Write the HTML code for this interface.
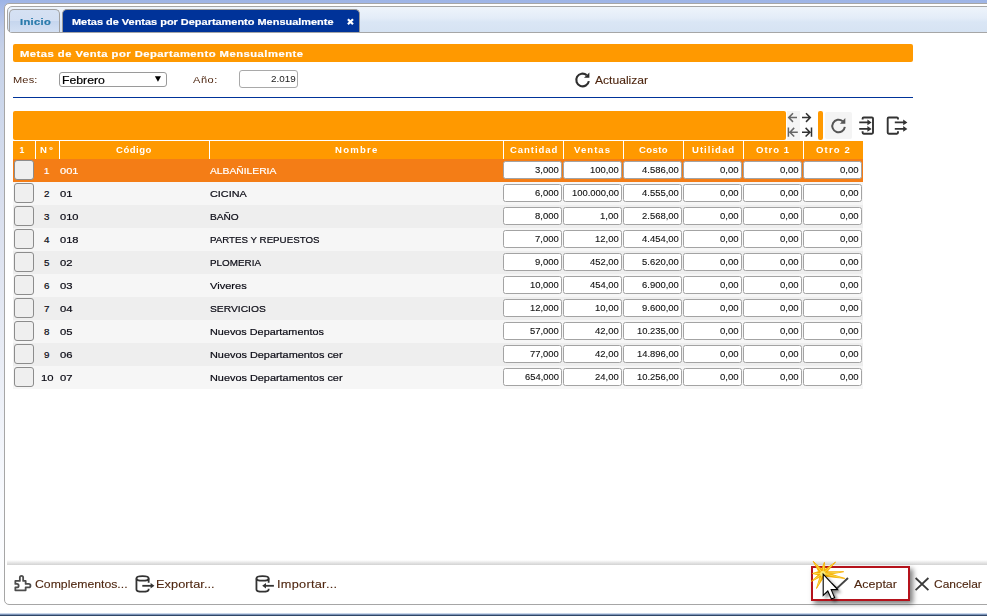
<!DOCTYPE html>
<html><head><meta charset="utf-8"><title>Metas de Ventas por Departamento Mensualmente</title>
<style>
html,body{margin:0;padding:0;}
body{width:987px;height:616px;overflow:hidden;position:relative;font-family:"Liberation Sans",sans-serif;
 background:linear-gradient(to bottom,#9db4e6 0px,#afc0e8 15px,#becbe8 30px,#c7d2e8 50px,#ccd7eb 100px,#d9dfee 200px,#e8ecf5 350px,#f8fafe 500px,#ffffff 616px);}
.abs{position:absolute;}
.t{position:absolute;display:block;transform-origin:0 0;white-space:nowrap;line-height:20px;height:20px;font-family:"Liberation Sans",sans-serif;}
#outer{left:4px;top:3px;width:1000px;height:600px;border:1px solid #a6a6a6;border-radius:5px;background:#fff;}
#nav{left:7px;top:6px;width:1000px;height:25px;border:1px solid #a6a6a6;border-radius:5px;
 background:linear-gradient(to bottom,#eef4fb 0%,#e3ecf8 45%,#dae6f5 60%,#d6e3f3 100%);}
#tab1{left:9px;top:9px;width:49px;height:22px;border:1px solid #a0a0a0;border-bottom:none;border-radius:5px 5px 0 0;
 background:linear-gradient(to bottom,#d5e1f3 0%,#d3dff2 48%,#c6d6ee 52%,#d3e0f3 100%);}
#tab2{left:62px;top:9px;width:296px;height:22px;border:1px solid #9a9a9a;border-bottom:none;border-radius:5px 5px 0 0;background:#003399;}
#title{left:13px;top:44px;width:900px;height:18px;border-radius:2px;background:#ff9900;}
#sel{left:59px;top:72px;width:106px;height:13px;border:1px solid #9a9a9a;border-radius:3px;background:#fff;}
#anio{left:239px;top:70px;width:57px;height:16px;border:1px solid #a9a9a9;border-radius:3px;background:#fff;}
#bline{left:13px;top:97px;width:900px;height:1px;background:#003399;}
#obar{left:13px;top:111px;width:773px;height:29px;border-radius:2px;background:#ff9900;}
#obar2{left:818px;top:111px;width:5px;height:29px;border-radius:2px;background:#ff9900;}
#g1{left:787px;top:111px;width:13px;height:29px;background:#f4f4f4;}
#g2{left:825px;top:112px;width:27px;height:27px;border-radius:2px;background:#f4f4f4;}
#thead{left:13px;top:141px;width:850px;height:18px;background:#ff9900;}
.vs{position:absolute;top:141px;width:1px;height:18px;background:#fff;}
.row{position:absolute;left:13px;width:850px;height:23px;}
.cb{position:absolute;left:1px;top:1px;width:18px;height:18px;border:1px solid #8c8c8c;border-radius:3px;background:#efefef;}
.in{position:absolute;top:2px;width:57px;height:16px;border:1px solid #a3a3a3;border-radius:2.5px;background:#fff;}
#fshadow{left:7px;top:560px;width:990px;height:5px;background:linear-gradient(to bottom,rgba(255,255,255,0) 0%,#ececec 40%,#d2d2d2 100%);}
#okbox{left:811px;top:566px;width:95px;height:31px;border:2px solid #b5121b;background:#fff;box-shadow:3px 3px 5px rgba(0,0,0,.5);}
#bot1{left:0;top:613px;width:987px;height:1px;background:#c9d6ea;}
#bot2{left:0;top:614px;width:987px;height:1px;background:#7d94b8;}
#bot3{left:0;top:615px;width:987px;height:1px;background:#2f4668;}
svg{position:absolute;left:0;top:0;overflow:visible;}
</style></head><body>
<div id="outer" class="abs"></div>
<div id="nav" class="abs"></div>
<div id="tab1" class="abs"></div>
<div id="tab2" class="abs"></div>
<div id="title" class="abs"></div>
<div id="sel" class="abs"></div>
<div id="anio" class="abs"></div>
<div id="bline" class="abs"></div>
<div id="obar" class="abs"></div>
<div id="g1" class="abs"></div>
<div id="obar2" class="abs"></div>
<div id="g2" class="abs"></div>
<div id="thead" class="abs"></div>
<div class="vs" style="left:35px"></div><div class="vs" style="left:59px"></div><div class="vs" style="left:209px"></div>
<div class="vs" style="left:503px"></div><div class="vs" style="left:563px"></div><div class="vs" style="left:623px"></div>
<div class="vs" style="left:683px"></div><div class="vs" style="left:743px"></div><div class="vs" style="left:803px"></div>
<div class="row" style="top:159px;background:#f47d16"><div class="cb"></div><div class="in" style="left:490px"></div><div class="in" style="left:550px"></div><div class="in" style="left:610px"></div><div class="in" style="left:670px"></div><div class="in" style="left:730px"></div><div class="in" style="left:790px"></div></div>
<div class="row" style="top:182px;background:#f6f6f6"><div class="cb"></div><div class="in" style="left:490px"></div><div class="in" style="left:550px"></div><div class="in" style="left:610px"></div><div class="in" style="left:670px"></div><div class="in" style="left:730px"></div><div class="in" style="left:790px"></div></div>
<div class="row" style="top:205px;background:#eeeeee"><div class="cb"></div><div class="in" style="left:490px"></div><div class="in" style="left:550px"></div><div class="in" style="left:610px"></div><div class="in" style="left:670px"></div><div class="in" style="left:730px"></div><div class="in" style="left:790px"></div></div>
<div class="row" style="top:228px;background:#f6f6f6"><div class="cb"></div><div class="in" style="left:490px"></div><div class="in" style="left:550px"></div><div class="in" style="left:610px"></div><div class="in" style="left:670px"></div><div class="in" style="left:730px"></div><div class="in" style="left:790px"></div></div>
<div class="row" style="top:251px;background:#eeeeee"><div class="cb"></div><div class="in" style="left:490px"></div><div class="in" style="left:550px"></div><div class="in" style="left:610px"></div><div class="in" style="left:670px"></div><div class="in" style="left:730px"></div><div class="in" style="left:790px"></div></div>
<div class="row" style="top:274px;background:#f6f6f6"><div class="cb"></div><div class="in" style="left:490px"></div><div class="in" style="left:550px"></div><div class="in" style="left:610px"></div><div class="in" style="left:670px"></div><div class="in" style="left:730px"></div><div class="in" style="left:790px"></div></div>
<div class="row" style="top:297px;background:#eeeeee"><div class="cb"></div><div class="in" style="left:490px"></div><div class="in" style="left:550px"></div><div class="in" style="left:610px"></div><div class="in" style="left:670px"></div><div class="in" style="left:730px"></div><div class="in" style="left:790px"></div></div>
<div class="row" style="top:320px;background:#f6f6f6"><div class="cb"></div><div class="in" style="left:490px"></div><div class="in" style="left:550px"></div><div class="in" style="left:610px"></div><div class="in" style="left:670px"></div><div class="in" style="left:730px"></div><div class="in" style="left:790px"></div></div>
<div class="row" style="top:343px;background:#eeeeee"><div class="cb"></div><div class="in" style="left:490px"></div><div class="in" style="left:550px"></div><div class="in" style="left:610px"></div><div class="in" style="left:670px"></div><div class="in" style="left:730px"></div><div class="in" style="left:790px"></div></div>
<div class="row" style="top:366px;background:#f6f6f6"><div class="cb"></div><div class="in" style="left:490px"></div><div class="in" style="left:550px"></div><div class="in" style="left:610px"></div><div class="in" style="left:670px"></div><div class="in" style="left:730px"></div><div class="in" style="left:790px"></div></div>
<div id="fshadow" class="abs"></div>
<div id="okbox" class="abs"></div>
<div id="bot1" class="abs"></div><div id="bot2" class="abs"></div><div id="bot3" class="abs"></div>
<span id="t0" class="t" style="left:19.73px;top:11.67px;font-size:9.6px;font-weight:700;color:#2779aa;letter-spacing:0.306px;transform:scaleX(1.1600);-webkit-text-stroke:0.2px currentColor;">Inicio</span>
<span id="t1" class="t" style="left:72.14px;top:11.60px;font-size:9.8px;font-weight:700;color:#fff;transform:scaleX(1.1171);-webkit-text-stroke:0.2px currentColor;">Metas de Ventas por Departamento Mensualmente</span>
<span id="t2" class="t" style="left:19.82px;top:43.84px;font-size:9.7px;font-weight:700;color:#fff;letter-spacing:0.415px;transform:scaleX(1.1600);-webkit-text-stroke:0.2px currentColor;">Metas de Venta por Departamento Mensualmente</span>
<span id="t3" class="t" style="left:13.34px;top:69.71px;font-size:9.5px;font-weight:400;color:#4e2610;letter-spacing:0.156px;transform:scaleX(1.1600);">Mes:</span>
<span id="t4" class="t" style="left:62.17px;top:70.19px;font-size:11px;font-weight:400;color:#000;transform:scaleX(1.1132);-webkit-text-stroke:0.2px currentColor;">Febrero</span>
<span id="t5" class="t" style="left:192.84px;top:69.71px;font-size:9.5px;font-weight:400;color:#4e2610;letter-spacing:0.477px;transform:scaleX(1.1600);">Año:</span>
<span id="t6" class="t" style="left:271.01px;top:69.05px;font-size:8.5px;font-weight:400;color:#1a1a1a;transform:scaleX(1.1598);">2.019</span>
<span id="t7" class="t" style="left:594.57px;top:70.19px;font-size:11px;font-weight:400;color:#4e2610;transform:scaleX(1.0989);-webkit-text-stroke:0.1px currentColor;">Actualizar</span>
<span id="t8" class="t" style="left:19.80px;top:140.32px;font-size:8.3px;font-weight:700;color:#fff;">1</span>
<span id="t9" class="t" style="left:40.43px;top:140.32px;font-size:8.3px;font-weight:700;color:#fff;letter-spacing:2.135px;transform:scaleX(1.1500);">Nº</span>
<span id="t10" class="t" style="left:116.03px;top:140.32px;font-size:8.3px;font-weight:700;color:#fff;letter-spacing:0.431px;transform:scaleX(1.1500);">Código</span>
<span id="t11" class="t" style="left:334.83px;top:140.32px;font-size:8.3px;font-weight:700;color:#fff;letter-spacing:1.074px;transform:scaleX(1.1500);">Nombre</span>
<span id="t12" class="t" style="left:509.53px;top:140.32px;font-size:8.3px;font-weight:700;color:#fff;letter-spacing:0.809px;transform:scaleX(1.1500);">Cantidad</span>
<span id="t13" class="t" style="left:574.43px;top:140.32px;font-size:8.3px;font-weight:700;color:#fff;letter-spacing:0.918px;transform:scaleX(1.1500);">Ventas</span>
<span id="t14" class="t" style="left:638.83px;top:140.32px;font-size:8.3px;font-weight:700;color:#fff;letter-spacing:0.347px;transform:scaleX(1.1500);">Costo</span>
<span id="t15" class="t" style="left:691.73px;top:140.32px;font-size:8.3px;font-weight:700;color:#fff;letter-spacing:0.876px;transform:scaleX(1.1500);">Utilidad</span>
<span id="t16" class="t" style="left:756.13px;top:140.32px;font-size:8.3px;font-weight:700;color:#fff;letter-spacing:0.876px;transform:scaleX(1.1500);">Otro 1</span>
<span id="t17" class="t" style="left:816.13px;top:140.32px;font-size:8.3px;font-weight:700;color:#fff;letter-spacing:0.998px;transform:scaleX(1.1500);">Otro 2</span>
<span id="t18" class="t" style="left:43.89px;top:160.70px;font-size:9.8px;font-weight:400;color:#fff;-webkit-text-stroke:0.2px currentColor;">1</span>
<span id="t19" class="t" style="left:60.33px;top:160.70px;font-size:9.8px;font-weight:400;color:#fff;transform:scaleX(1.1349);-webkit-text-stroke:0.2px currentColor;">001</span>
<span id="t20" class="t" style="left:209.98px;top:160.70px;font-size:9.8px;font-weight:400;color:#fff;transform:scaleX(1.0501);-webkit-text-stroke:0.2px currentColor;">ALBAÑILERIA</span>
<span id="t21" class="t" style="left:535.16px;top:159.95px;font-size:8.5px;font-weight:400;color:#111;transform:scaleX(1.1137);-webkit-text-stroke:0.1px currentColor;">3,000</span>
<span id="t22" class="t" style="left:590.08px;top:159.95px;font-size:8.5px;font-weight:400;color:#111;transform:scaleX(1.1070);-webkit-text-stroke:0.1px currentColor;">100,00</span>
<span id="t23" class="t" style="left:642.07px;top:159.95px;font-size:8.5px;font-weight:400;color:#111;transform:scaleX(1.1116);-webkit-text-stroke:0.1px currentColor;">4.586,00</span>
<span id="t24" class="t" style="left:720.25px;top:159.95px;font-size:8.5px;font-weight:400;color:#111;transform:scaleX(1.1255);-webkit-text-stroke:0.1px currentColor;">0,00</span>
<span id="t25" class="t" style="left:780.25px;top:159.95px;font-size:8.5px;font-weight:400;color:#111;transform:scaleX(1.1255);-webkit-text-stroke:0.1px currentColor;">0,00</span>
<span id="t26" class="t" style="left:840.25px;top:159.95px;font-size:8.5px;font-weight:400;color:#111;transform:scaleX(1.1255);-webkit-text-stroke:0.1px currentColor;">0,00</span>
<span id="t27" class="t" style="left:43.89px;top:183.70px;font-size:9.8px;font-weight:400;color:#0a0a14;-webkit-text-stroke:0.2px currentColor;">2</span>
<span id="t28" class="t" style="left:60.32px;top:183.70px;font-size:9.8px;font-weight:400;color:#0a0a14;transform:scaleX(1.1503);-webkit-text-stroke:0.2px currentColor;">01</span>
<span id="t29" class="t" style="left:209.95px;top:183.70px;font-size:9.8px;font-weight:400;color:#0a0a14;transform:scaleX(1.1050);-webkit-text-stroke:0.2px currentColor;">CICINA</span>
<span id="t30" class="t" style="left:535.16px;top:182.95px;font-size:8.5px;font-weight:400;color:#111;transform:scaleX(1.1137);-webkit-text-stroke:0.1px currentColor;">6,000</span>
<span id="t31" class="t" style="left:571.90px;top:182.95px;font-size:8.5px;font-weight:400;color:#111;transform:scaleX(1.1037);-webkit-text-stroke:0.1px currentColor;">100.000,00</span>
<span id="t32" class="t" style="left:642.07px;top:182.95px;font-size:8.5px;font-weight:400;color:#111;transform:scaleX(1.1116);-webkit-text-stroke:0.1px currentColor;">4.555,00</span>
<span id="t33" class="t" style="left:720.25px;top:182.95px;font-size:8.5px;font-weight:400;color:#111;transform:scaleX(1.1255);-webkit-text-stroke:0.1px currentColor;">0,00</span>
<span id="t34" class="t" style="left:780.25px;top:182.95px;font-size:8.5px;font-weight:400;color:#111;transform:scaleX(1.1255);-webkit-text-stroke:0.1px currentColor;">0,00</span>
<span id="t35" class="t" style="left:840.25px;top:182.95px;font-size:8.5px;font-weight:400;color:#111;transform:scaleX(1.1255);-webkit-text-stroke:0.1px currentColor;">0,00</span>
<span id="t36" class="t" style="left:43.89px;top:206.70px;font-size:9.8px;font-weight:400;color:#0a0a14;-webkit-text-stroke:0.2px currentColor;">3</span>
<span id="t37" class="t" style="left:60.33px;top:206.70px;font-size:9.8px;font-weight:400;color:#0a0a14;transform:scaleX(1.1349);-webkit-text-stroke:0.2px currentColor;">010</span>
<span id="t38" class="t" style="left:209.99px;top:206.70px;font-size:9.8px;font-weight:400;color:#0a0a14;transform:scaleX(1.0343);-webkit-text-stroke:0.2px currentColor;">BAÑO</span>
<span id="t39" class="t" style="left:535.16px;top:205.95px;font-size:8.5px;font-weight:400;color:#111;transform:scaleX(1.1137);-webkit-text-stroke:0.1px currentColor;">8,000</span>
<span id="t40" class="t" style="left:600.25px;top:205.95px;font-size:8.5px;font-weight:400;color:#111;transform:scaleX(1.1255);-webkit-text-stroke:0.1px currentColor;">1,00</span>
<span id="t41" class="t" style="left:642.07px;top:205.95px;font-size:8.5px;font-weight:400;color:#111;transform:scaleX(1.1116);-webkit-text-stroke:0.1px currentColor;">2.568,00</span>
<span id="t42" class="t" style="left:720.25px;top:205.95px;font-size:8.5px;font-weight:400;color:#111;transform:scaleX(1.1255);-webkit-text-stroke:0.1px currentColor;">0,00</span>
<span id="t43" class="t" style="left:780.25px;top:205.95px;font-size:8.5px;font-weight:400;color:#111;transform:scaleX(1.1255);-webkit-text-stroke:0.1px currentColor;">0,00</span>
<span id="t44" class="t" style="left:840.25px;top:205.95px;font-size:8.5px;font-weight:400;color:#111;transform:scaleX(1.1255);-webkit-text-stroke:0.1px currentColor;">0,00</span>
<span id="t45" class="t" style="left:43.89px;top:229.70px;font-size:9.8px;font-weight:400;color:#0a0a14;-webkit-text-stroke:0.2px currentColor;">4</span>
<span id="t46" class="t" style="left:60.33px;top:229.70px;font-size:9.8px;font-weight:400;color:#0a0a14;transform:scaleX(1.1349);-webkit-text-stroke:0.2px currentColor;">018</span>
<span id="t47" class="t" style="left:210.02px;top:229.70px;font-size:9.8px;font-weight:400;color:#0a0a14;transform:scaleX(0.9936);-webkit-text-stroke:0.2px currentColor;">PARTES Y REPUESTOS</span>
<span id="t48" class="t" style="left:535.16px;top:228.95px;font-size:8.5px;font-weight:400;color:#111;transform:scaleX(1.1137);-webkit-text-stroke:0.1px currentColor;">7,000</span>
<span id="t49" class="t" style="left:595.16px;top:228.95px;font-size:8.5px;font-weight:400;color:#111;transform:scaleX(1.1137);-webkit-text-stroke:0.1px currentColor;">12,00</span>
<span id="t50" class="t" style="left:642.07px;top:228.95px;font-size:8.5px;font-weight:400;color:#111;transform:scaleX(1.1116);-webkit-text-stroke:0.1px currentColor;">4.454,00</span>
<span id="t51" class="t" style="left:720.25px;top:228.95px;font-size:8.5px;font-weight:400;color:#111;transform:scaleX(1.1255);-webkit-text-stroke:0.1px currentColor;">0,00</span>
<span id="t52" class="t" style="left:780.25px;top:228.95px;font-size:8.5px;font-weight:400;color:#111;transform:scaleX(1.1255);-webkit-text-stroke:0.1px currentColor;">0,00</span>
<span id="t53" class="t" style="left:840.25px;top:228.95px;font-size:8.5px;font-weight:400;color:#111;transform:scaleX(1.1255);-webkit-text-stroke:0.1px currentColor;">0,00</span>
<span id="t54" class="t" style="left:43.89px;top:252.70px;font-size:9.8px;font-weight:400;color:#0a0a14;-webkit-text-stroke:0.2px currentColor;">5</span>
<span id="t55" class="t" style="left:60.32px;top:252.70px;font-size:9.8px;font-weight:400;color:#0a0a14;transform:scaleX(1.1503);-webkit-text-stroke:0.2px currentColor;">02</span>
<span id="t56" class="t" style="left:210.01px;top:252.70px;font-size:9.8px;font-weight:400;color:#0a0a14;transform:scaleX(1.0068);-webkit-text-stroke:0.2px currentColor;">PLOMERIA</span>
<span id="t57" class="t" style="left:535.16px;top:251.95px;font-size:8.5px;font-weight:400;color:#111;transform:scaleX(1.1137);-webkit-text-stroke:0.1px currentColor;">9,000</span>
<span id="t58" class="t" style="left:590.08px;top:251.95px;font-size:8.5px;font-weight:400;color:#111;transform:scaleX(1.1070);-webkit-text-stroke:0.1px currentColor;">452,00</span>
<span id="t59" class="t" style="left:642.07px;top:251.95px;font-size:8.5px;font-weight:400;color:#111;transform:scaleX(1.1116);-webkit-text-stroke:0.1px currentColor;">5.620,00</span>
<span id="t60" class="t" style="left:720.25px;top:251.95px;font-size:8.5px;font-weight:400;color:#111;transform:scaleX(1.1255);-webkit-text-stroke:0.1px currentColor;">0,00</span>
<span id="t61" class="t" style="left:780.25px;top:251.95px;font-size:8.5px;font-weight:400;color:#111;transform:scaleX(1.1255);-webkit-text-stroke:0.1px currentColor;">0,00</span>
<span id="t62" class="t" style="left:840.25px;top:251.95px;font-size:8.5px;font-weight:400;color:#111;transform:scaleX(1.1255);-webkit-text-stroke:0.1px currentColor;">0,00</span>
<span id="t63" class="t" style="left:43.89px;top:275.70px;font-size:9.8px;font-weight:400;color:#0a0a14;-webkit-text-stroke:0.2px currentColor;">6</span>
<span id="t64" class="t" style="left:60.32px;top:275.70px;font-size:9.8px;font-weight:400;color:#0a0a14;transform:scaleX(1.1503);-webkit-text-stroke:0.2px currentColor;">03</span>
<span id="t65" class="t" style="left:209.94px;top:275.70px;font-size:9.8px;font-weight:400;color:#0a0a14;transform:scaleX(1.1305);-webkit-text-stroke:0.2px currentColor;">Viveres</span>
<span id="t66" class="t" style="left:530.08px;top:274.95px;font-size:8.5px;font-weight:400;color:#111;transform:scaleX(1.1070);-webkit-text-stroke:0.1px currentColor;">10,000</span>
<span id="t67" class="t" style="left:590.08px;top:274.95px;font-size:8.5px;font-weight:400;color:#111;transform:scaleX(1.1070);-webkit-text-stroke:0.1px currentColor;">454,00</span>
<span id="t68" class="t" style="left:642.07px;top:274.95px;font-size:8.5px;font-weight:400;color:#111;transform:scaleX(1.1116);-webkit-text-stroke:0.1px currentColor;">6.900,00</span>
<span id="t69" class="t" style="left:720.25px;top:274.95px;font-size:8.5px;font-weight:400;color:#111;transform:scaleX(1.1255);-webkit-text-stroke:0.1px currentColor;">0,00</span>
<span id="t70" class="t" style="left:780.25px;top:274.95px;font-size:8.5px;font-weight:400;color:#111;transform:scaleX(1.1255);-webkit-text-stroke:0.1px currentColor;">0,00</span>
<span id="t71" class="t" style="left:840.25px;top:274.95px;font-size:8.5px;font-weight:400;color:#111;transform:scaleX(1.1255);-webkit-text-stroke:0.1px currentColor;">0,00</span>
<span id="t72" class="t" style="left:43.89px;top:298.70px;font-size:9.8px;font-weight:400;color:#0a0a14;-webkit-text-stroke:0.2px currentColor;">7</span>
<span id="t73" class="t" style="left:60.32px;top:298.70px;font-size:9.8px;font-weight:400;color:#0a0a14;transform:scaleX(1.1503);-webkit-text-stroke:0.2px currentColor;">04</span>
<span id="t74" class="t" style="left:209.98px;top:298.70px;font-size:9.8px;font-weight:400;color:#0a0a14;transform:scaleX(1.0498);-webkit-text-stroke:0.2px currentColor;">SERVICIOS</span>
<span id="t75" class="t" style="left:530.08px;top:297.95px;font-size:8.5px;font-weight:400;color:#111;transform:scaleX(1.1070);-webkit-text-stroke:0.1px currentColor;">12,000</span>
<span id="t76" class="t" style="left:595.16px;top:297.95px;font-size:8.5px;font-weight:400;color:#111;transform:scaleX(1.1137);-webkit-text-stroke:0.1px currentColor;">10,00</span>
<span id="t77" class="t" style="left:642.07px;top:297.95px;font-size:8.5px;font-weight:400;color:#111;transform:scaleX(1.1116);-webkit-text-stroke:0.1px currentColor;">9.600,00</span>
<span id="t78" class="t" style="left:720.25px;top:297.95px;font-size:8.5px;font-weight:400;color:#111;transform:scaleX(1.1255);-webkit-text-stroke:0.1px currentColor;">0,00</span>
<span id="t79" class="t" style="left:780.25px;top:297.95px;font-size:8.5px;font-weight:400;color:#111;transform:scaleX(1.1255);-webkit-text-stroke:0.1px currentColor;">0,00</span>
<span id="t80" class="t" style="left:840.25px;top:297.95px;font-size:8.5px;font-weight:400;color:#111;transform:scaleX(1.1255);-webkit-text-stroke:0.1px currentColor;">0,00</span>
<span id="t81" class="t" style="left:43.89px;top:321.70px;font-size:9.8px;font-weight:400;color:#0a0a14;-webkit-text-stroke:0.2px currentColor;">8</span>
<span id="t82" class="t" style="left:60.32px;top:321.70px;font-size:9.8px;font-weight:400;color:#0a0a14;transform:scaleX(1.1503);-webkit-text-stroke:0.2px currentColor;">05</span>
<span id="t83" class="t" style="left:209.95px;top:321.70px;font-size:9.8px;font-weight:400;color:#0a0a14;transform:scaleX(1.1068);-webkit-text-stroke:0.2px currentColor;">Nuevos Departamentos</span>
<span id="t84" class="t" style="left:530.08px;top:320.95px;font-size:8.5px;font-weight:400;color:#111;transform:scaleX(1.1070);-webkit-text-stroke:0.1px currentColor;">57,000</span>
<span id="t85" class="t" style="left:595.16px;top:320.95px;font-size:8.5px;font-weight:400;color:#111;transform:scaleX(1.1137);-webkit-text-stroke:0.1px currentColor;">42,00</span>
<span id="t86" class="t" style="left:636.99px;top:320.95px;font-size:8.5px;font-weight:400;color:#111;transform:scaleX(1.1069);-webkit-text-stroke:0.1px currentColor;">10.235,00</span>
<span id="t87" class="t" style="left:720.25px;top:320.95px;font-size:8.5px;font-weight:400;color:#111;transform:scaleX(1.1255);-webkit-text-stroke:0.1px currentColor;">0,00</span>
<span id="t88" class="t" style="left:780.25px;top:320.95px;font-size:8.5px;font-weight:400;color:#111;transform:scaleX(1.1255);-webkit-text-stroke:0.1px currentColor;">0,00</span>
<span id="t89" class="t" style="left:840.25px;top:320.95px;font-size:8.5px;font-weight:400;color:#111;transform:scaleX(1.1255);-webkit-text-stroke:0.1px currentColor;">0,00</span>
<span id="t90" class="t" style="left:43.89px;top:344.70px;font-size:9.8px;font-weight:400;color:#0a0a14;-webkit-text-stroke:0.2px currentColor;">9</span>
<span id="t91" class="t" style="left:60.32px;top:344.70px;font-size:9.8px;font-weight:400;color:#0a0a14;transform:scaleX(1.1503);-webkit-text-stroke:0.2px currentColor;">06</span>
<span id="t92" class="t" style="left:209.95px;top:344.70px;font-size:9.8px;font-weight:400;color:#0a0a14;transform:scaleX(1.1111);-webkit-text-stroke:0.2px currentColor;">Nuevos Departamentos cer</span>
<span id="t93" class="t" style="left:530.08px;top:343.95px;font-size:8.5px;font-weight:400;color:#111;transform:scaleX(1.1070);-webkit-text-stroke:0.1px currentColor;">77,000</span>
<span id="t94" class="t" style="left:595.16px;top:343.95px;font-size:8.5px;font-weight:400;color:#111;transform:scaleX(1.1137);-webkit-text-stroke:0.1px currentColor;">42,00</span>
<span id="t95" class="t" style="left:636.99px;top:343.95px;font-size:8.5px;font-weight:400;color:#111;transform:scaleX(1.1069);-webkit-text-stroke:0.1px currentColor;">14.896,00</span>
<span id="t96" class="t" style="left:720.25px;top:343.95px;font-size:8.5px;font-weight:400;color:#111;transform:scaleX(1.1255);-webkit-text-stroke:0.1px currentColor;">0,00</span>
<span id="t97" class="t" style="left:780.25px;top:343.95px;font-size:8.5px;font-weight:400;color:#111;transform:scaleX(1.1255);-webkit-text-stroke:0.1px currentColor;">0,00</span>
<span id="t98" class="t" style="left:840.25px;top:343.95px;font-size:8.5px;font-weight:400;color:#111;transform:scaleX(1.1255);-webkit-text-stroke:0.1px currentColor;">0,00</span>
<span id="t99" class="t" style="left:40.78px;top:367.70px;font-size:9.8px;font-weight:400;color:#0a0a14;transform:scaleX(1.1503);-webkit-text-stroke:0.2px currentColor;">10</span>
<span id="t100" class="t" style="left:60.32px;top:367.70px;font-size:9.8px;font-weight:400;color:#0a0a14;transform:scaleX(1.1503);-webkit-text-stroke:0.2px currentColor;">07</span>
<span id="t101" class="t" style="left:209.95px;top:367.70px;font-size:9.8px;font-weight:400;color:#0a0a14;transform:scaleX(1.1111);-webkit-text-stroke:0.2px currentColor;">Nuevos Departamentos cer</span>
<span id="t102" class="t" style="left:524.99px;top:366.95px;font-size:8.5px;font-weight:400;color:#111;transform:scaleX(1.1019);-webkit-text-stroke:0.1px currentColor;">654,000</span>
<span id="t103" class="t" style="left:595.16px;top:366.95px;font-size:8.5px;font-weight:400;color:#111;transform:scaleX(1.1137);-webkit-text-stroke:0.1px currentColor;">24,00</span>
<span id="t104" class="t" style="left:636.99px;top:366.95px;font-size:8.5px;font-weight:400;color:#111;transform:scaleX(1.1069);-webkit-text-stroke:0.1px currentColor;">10.256,00</span>
<span id="t105" class="t" style="left:720.25px;top:366.95px;font-size:8.5px;font-weight:400;color:#111;transform:scaleX(1.1255);-webkit-text-stroke:0.1px currentColor;">0,00</span>
<span id="t106" class="t" style="left:780.25px;top:366.95px;font-size:8.5px;font-weight:400;color:#111;transform:scaleX(1.1255);-webkit-text-stroke:0.1px currentColor;">0,00</span>
<span id="t107" class="t" style="left:840.25px;top:366.95px;font-size:8.5px;font-weight:400;color:#111;transform:scaleX(1.1255);-webkit-text-stroke:0.1px currentColor;">0,00</span>
<span id="t108" class="t" style="left:34.97px;top:574.19px;font-size:11px;font-weight:400;color:#4e2610;transform:scaleX(1.1135);-webkit-text-stroke:0.1px currentColor;">Complementos...</span>
<span id="t109" class="t" style="left:155.63px;top:574.19px;font-size:11px;font-weight:400;color:#4e2610;letter-spacing:0.043px;transform:scaleX(1.1600);-webkit-text-stroke:0.1px currentColor;">Exportar...</span>
<span id="t110" class="t" style="left:276.53px;top:574.19px;font-size:11px;font-weight:400;color:#4e2610;letter-spacing:0.224px;transform:scaleX(1.1600);-webkit-text-stroke:0.1px currentColor;">Importar...</span>
<span id="t111" class="t" style="left:853.55px;top:574.19px;font-size:11px;font-weight:400;color:#4e2610;transform:scaleX(1.1318);-webkit-text-stroke:0.1px currentColor;">Aceptar</span>
<span id="t112" class="t" style="left:933.78px;top:574.19px;font-size:11px;font-weight:400;color:#4e2610;transform:scaleX(1.0868);-webkit-text-stroke:0.1px currentColor;">Cancelar</span>
<svg width="987" height="616" viewBox="0 0 987 616">
<!--ICONS_START-->
<!-- tab close -->
<path d="M347.9 19.2 L353 24.2 M353 19.2 L347.9 24.2" stroke="#fff" stroke-width="2.2" fill="none"/>
<!-- select arrow -->
<path d="M154.9 76.3 H161 L157.95 81.8 Z" fill="#000"/>
<!-- Actualizar refresh icon -->
<g fill="none" stroke="#2e2e2e" stroke-width="2.1" stroke-linecap="butt">
<path d="M588.85 81.1 A6.35 6.35 0 1 1 586.68 75.14"/>
</g>
<path d="M589.4 72.4 V77.7 H584 Z" fill="#2e2e2e"/>
<!-- nav arrows -->
<g fill="none" stroke="#666" stroke-width="1.5">
<path d="M797 117.6 H788.8 M793 113.3 L788.7 117.6 L793 121.9"/>
<path d="M788.4 127.6 V136.8 M797.8 132.2 H790 M794.2 127.9 L789.9 132.2 L794.2 136.5"/>
</g>
<g fill="none" stroke="#333" stroke-width="1.5">
<path d="M802 117.6 H810.2 M806 113.3 L810.3 117.6 L806 121.9"/>
<path d="M811.5 127.6 V136.8 M802 132.2 H809.8 M805.6 127.9 L809.9 132.2 L805.6 136.5"/>
</g>
<!-- toolbar refresh -->
<g fill="none" stroke="#555" stroke-width="2">
<path d="M844.84 126.88 A6.3 6.3 0 1 1 842.65 121.17"/>
</g>
<path d="M845.3 118 V123.8 H839.9 Z" fill="#555"/>
<!-- import -->
<g fill="none" stroke="#333" stroke-width="1.9" stroke-linejoin="round">
<path d="M862.6 119.6 V118.6 Q862.6 117.5 863.7 117.5 H871.9 Q873 117.5 873 118.6 V132.6 Q873 133.7 871.9 133.7 H863.7 Q862.6 133.7 862.6 132.6 V131.3"/>
<path d="M859.2 122.4 H868.5 M859.2 128.9 H868.5" stroke-width="1.8"/>
</g>
<path d="M867.4 119.5 L871.6 122.4 L867.4 125.3 Z M867.4 126 L871.6 128.9 L867.4 131.8 Z" fill="#333"/>
<!-- export -->
<g fill="none" stroke="#333" stroke-width="1.9" stroke-linejoin="round">
<path d="M898 119.6 V118.6 Q898 117.5 896.9 117.5 H888.8 Q887.7 117.5 887.7 118.6 V132.6 Q887.7 133.7 888.8 133.7 H896.9 Q898 133.7 898 132.6 V131.3"/>
<path d="M894.8 122.4 H904 M894.8 128.9 H904" stroke-width="1.8"/>
</g>
<path d="M903.2 119.5 L907.4 122.4 L903.2 125.3 Z M903.2 126 L907.4 128.9 L903.2 131.8 Z" fill="#333"/>
<!-- puzzle -->
<path d="M15.35 580.95 H19.85 V577.6 A1.65 1.65 0 0 1 23.15 577.6 V580.95 H25.65 V583.95 H28.7 A1.75 1.75 0 0 1 28.7 587.45 H25.65 V590.35 H15.35 V587.45 H16.9 A1.75 1.75 0 0 0 16.9 583.95 H15.35 Z" fill="none" stroke="#4c4c4c" stroke-width="1.8" stroke-linejoin="round"/>
<!-- export db -->
<g fill="none" stroke="#333" stroke-width="1.8">
<ellipse cx="142.55" cy="578.4" rx="6.1" ry="2.3"/>
<path d="M136.45 578.4 V589.4 A6.1 2.3 0 0 0 148.65 589.4 V588.8 M148.65 578.4 V582.8"/>
<path d="M142.3 585.8 H151.5"/>
</g>
<path d="M150.6 583 L154.4 585.8 L150.6 588.6 Z" fill="#333"/>
<!-- import db -->
<g fill="none" stroke="#333" stroke-width="1.8">
<ellipse cx="262.55" cy="578.4" rx="6.1" ry="2.3"/>
<path d="M256.45 578.4 V589.4 A6.1 2.3 0 0 0 268.65 589.4 V588.8 M268.65 578.4 V582.8"/>
<path d="M265 585.8 H273.9"/>
</g>
<path d="M266 583 L262.2 585.8 L266 588.6 Z" fill="#333"/>
<!-- check -->
<path d="M831.5 583.6 L836.8 588.4 L848 578" fill="none" stroke="#444" stroke-width="1.9"/>
<!-- X cancel -->
<path d="M915.6 578 L928.4 590.2 M928.4 578 L915.6 590.2" fill="none" stroke="#3a3a3a" stroke-width="1.8"/>
<!-- starburst -->
<polygon points="813.1,561.2 821.6,569.1 824.4,562.3 825.0,569.5 835.6,562.0 827.0,571.7 843.7,571.7 830.8,574.1 844.8,578.4 824.2,576.2 816.5,588.5 819.9,577.1 811.2,581.4 818.4,574.9 812.3,573.5 818.7,571.5" fill="#f6ae00" stroke="#f6ae00" stroke-width="0.8" stroke-linejoin="round"/>
<path d="M822.8 573.55 L815.1 563.7 M822.8 573.55 L824.1 564.5 M822.8 573.55 L833.0 564.3 M822.8 573.55 L839.5 572.1 M822.8 573.55 L840.4 577.4 M822.8 573.55 L817.7 585.5 M822.8 573.55 L813.5 579.8 M822.8 573.55 L814.4 573.5" stroke="#f8d84a" stroke-width="1" fill="none"/>
<circle cx="822.8" cy="573.55" r="2.6" fill="#f8e878"/>
<!-- cursor -->
<g filter="url(#cs)">
<path d="M823.2 574.2 V595.4 L827.8 591 L831.4 599 L834.6 597.7 L831.2 589.6 H837.6 Z" fill="#fff" stroke="#000" stroke-width="1.1" stroke-linejoin="miter"/>
</g>
<defs><filter id="cs" x="-50%" y="-50%" width="250%" height="250%"><feDropShadow dx="2.5" dy="2.5" stdDeviation="1.6" flood-color="#000" flood-opacity=".45"/></filter></defs>

<!--ICONS_END-->
</svg>
</body></html>
